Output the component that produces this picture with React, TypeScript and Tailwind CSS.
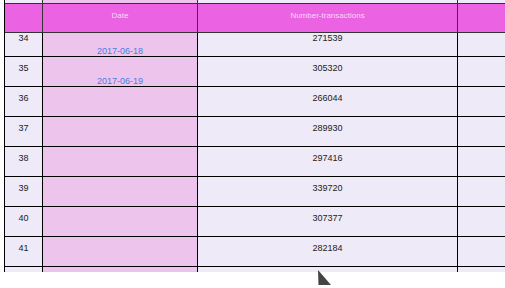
import React from 'react';

type Row = { id: number; date?: string; count: string };

const rows: Row[] = [
  { id: 34, date: '2017-06-18', count: '271539' },
  { id: 35, date: '2017-06-19', count: '305320' },
  { id: 36, count: '266044' },
  { id: 37, count: '289930' },
  { id: 38, count: '297416' },
  { id: 39, count: '339720' },
  { id: 40, count: '307377' },
  { id: 41, count: '282184' },
  { id: 42, count: '' },
];

const cols = 'grid grid-cols-[37px_1px_154px_1px_259px_1px_1fr]';

export default function App() {
  return (
    <div className="relative h-[288px] w-[505px] overflow-hidden bg-white font-['Liberation_Sans',Arial,sans-serif]">
      <div className="ml-[4px] flex h-[272px] flex-col overflow-hidden border-l border-black">
        {/* sliver of the row above the sticky header */}
        <div className={`${cols} h-[3px] shrink-0`}>
          <div className="bg-[#EEEAF8]" />
          <div className="bg-[#333]" />
          <div className="bg-[#ECC4EC]" />
          <div className="bg-[#333]" />
          <div className="bg-[#EEEAF8]" />
          <div className="bg-[#333]" />
          <div className="bg-[#EEEAF8]" />
        </div>

        {/* header */}
        <div className={`${cols} h-[30px] shrink-0 border-y border-[#333] bg-[#EB63E3] text-[8px] leading-[11px] text-[#F9D6F6]`}>
          <div />
          <div className="bg-[#333]" />
          <div className="pt-[6px] text-center">Date</div>
          <div className="bg-[#333]" />
          <div className="pt-[6px] text-center">Number-transactions</div>
          <div className="bg-[#333]" />
          <div />
        </div>

        {/* body */}
        <div className="flex-1 overflow-hidden">
          <div className="-mt-[6px]">
            {rows.map((r) => (
              <div key={r.id} className={`${cols} h-[30px] border-b border-black text-[9px] leading-[11px] text-[#222]`}>
                <div className="bg-[#EEEAF8] pt-[6px] text-center">{r.count ? r.id : ''}</div>
                <div className="bg-black" />
                <div className="bg-[#ECC4EC] pt-[6px] text-center">
                  <div className="h-[11px]" />
                  <div className="mt-[3px] h-[9px] leading-[9px] text-[#4A7FE3]">{r.date ?? ''}</div>
                </div>
                <div className="bg-black" />
                <div className="bg-[#EEEAF8] pt-[6px] text-center">{r.count}</div>
                <div className="bg-black" />
                <div className="bg-[#EEEAF8]" />
              </div>
            ))}
          </div>
        </div>
      </div>

      {/* mouse pointer */}
      <svg className="absolute left-[317px] top-[269px]" width="16" height="18" viewBox="0 0 16 18">
        <polygon points="1,1 1.5,16 14,16" fill="#444" />
      </svg>
    </div>
  );
}
